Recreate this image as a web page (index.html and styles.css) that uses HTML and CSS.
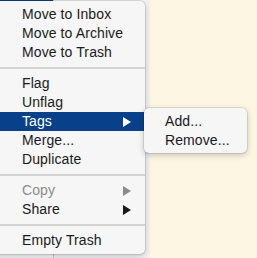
FILE: index.html
```html
<!DOCTYPE html>
<html>
<head>
<meta charset="utf-8">
<link rel="stylesheet" href="styles.css">
</head>
<body>
<div class="backdrop">
  <div class="sidebar"><div class="sel"></div></div>
  <div class="list"></div>
  <div class="content"></div>
</div>

<div class="menu main-menu">
  <div class="item">Move to Inbox</div>
  <div class="item">Move to Archive</div>
  <div class="item">Move to Trash</div>
  <div class="sep"></div>
  <div class="item">Flag</div>
  <div class="item">Unflag</div>
  <div class="item active">Tags<span class="arrow"></span></div>
  <div class="item">Merge...</div>
  <div class="item">Duplicate</div>
  <div class="sep"></div>
  <div class="item disabled">Copy<span class="arrow"></span></div>
  <div class="item">Share<span class="arrow"></span></div>
  <div class="sep"></div>
  <div class="item">Empty Trash</div>
</div>

<div class="menu sub-menu">
  <div class="item">Add...</div>
  <div class="item">Remove...</div>
</div>
</body>
</html>
```
FILE: styles.css
```css
html, body {
  margin: 0;
  padding: 0;
}
body {
  width: 257px;
  height: 258px;
  overflow: hidden;
  position: relative;
  background: #fdf6e3;
  font-family: "Liberation Sans", Arial, sans-serif;
  font-size: 14px;
  color: #1a1a1a;
}
.backdrop {
  display: flex;
  height: 258px;
}
.sidebar {
  width: 53px;
  background: #f4f4f4;
  border-right: 1px solid #c8c8c8;
}
.sel {
  height: 2px;
  background: #0b3f7e;
}
.list {
  width: 96px;
  background: #f2f2f2;
}
.content {
  flex: 1;
  background: #fdf6e3;
}
.menu {
  position: absolute;
  background: #f6f6f6;
  box-shadow: 0 0 0 0.5px rgba(0, 0, 0, 0.18), 0 2px 6px rgba(0, 0, 0, 0.22);
}
.main-menu {
  left: -6px;
  top: 1px;
  width: 151px;
  padding: 4px 0 4px 0;
  border-radius: 0 5px 5px 0;
}
.sub-menu {
  left: 144px;
  top: 108px;
  width: 103px;
  padding: 4px 0 3px 0;
  border-radius: 5px;
}
.item {
  height: 19px;
  line-height: 19px;
  padding: 0 14px 0 28px;
  display: flex;
  align-items: center;
  justify-content: space-between;
  white-space: nowrap;
  letter-spacing: 0.1px;
}
.sub-menu .item {
  padding-left: 21px;
}
.item.active {
  background: #08408a;
  color: #ffffff;
}
.item.disabled {
  color: #8c8c8c;
}
.arrow {
  width: 0;
  height: 0;
  border-top: 5px solid transparent;
  border-bottom: 5px solid transparent;
  border-left: 8px solid #1a1a1a;
}
.active .arrow {
  border-left-color: #ffffff;
}
.disabled .arrow {
  border-left-color: #8c8c8c;
}
.sep {
  height: 12px;
  display: flex;
  align-items: center;
}
.sep::before {
  content: "";
  display: block;
  width: 100%;
  height: 2px;
  background: #d3d3d3;
}
```
